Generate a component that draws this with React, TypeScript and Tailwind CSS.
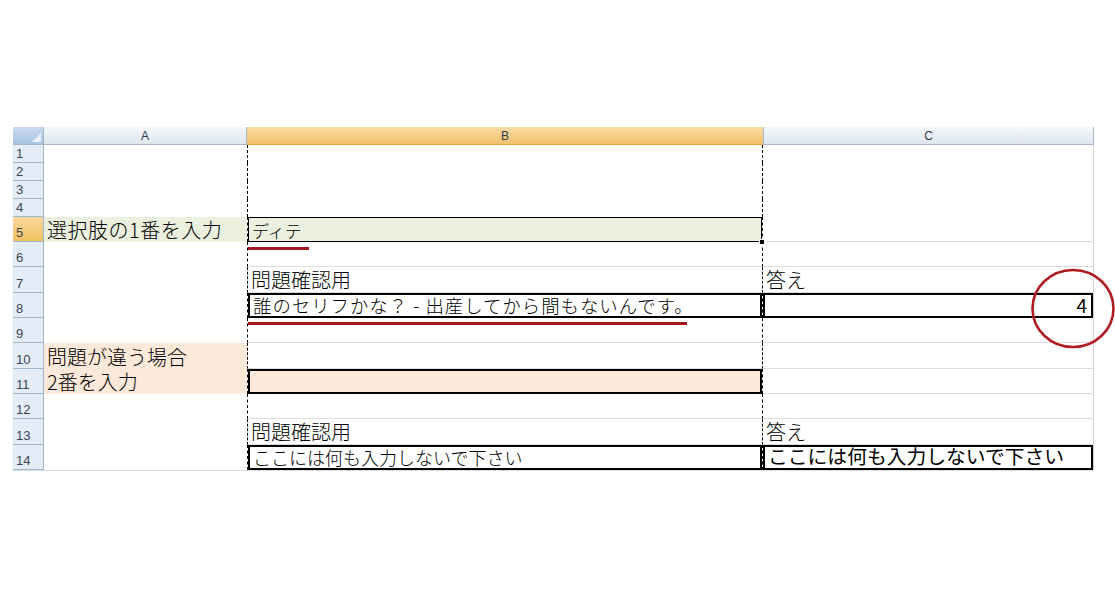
import React from 'react';

type CellSpec = {
  text?: string;
  bg?: string;
  box?: 'thin' | 'thick';
  size?: string;
  align?: 'left' | 'right';
  weight?: string;
  handle?: boolean;
};

type RowSpec = {
  n: number;
  h: string;
  grid: boolean;
  a?: CellSpec;
  b?: CellSpec;
  c?: CellSpec;
};

const rows: RowSpec[] = [
  { n: 1, h: 'h-[18px]', grid: false },
  { n: 2, h: 'h-[18px]', grid: false },
  { n: 3, h: 'h-[18px]', grid: false },
  { n: 4, h: 'h-[18px]', grid: false },
  {
    n: 5,
    h: 'h-[25px]',
    grid: true,
    a: { text: '選択肢の1番を入力', bg: 'bg-[#ebf1de]', size: 'text-[20px] tracking-[0.5px]' },
    b: { text: 'ディテ', bg: 'bg-[#ebf1de]', box: 'thin', size: 'text-[17px]', handle: true },
  },
  { n: 6, h: 'h-[25px]', grid: true },
  { n: 7, h: 'h-[26px]', grid: true, b: { text: '問題確認用' }, c: { text: '答え' } },
  {
    n: 8,
    h: 'h-[25px]',
    grid: true,
    b: { text: '誰のセリフかな？ - 出産してから間もないんです。', box: 'thick', size: 'text-[18.4px] tracking-[1px]' },
    c: { text: '4', box: 'thick', align: 'right', size: 'text-[19px]', weight: 'font-normal' },
  },
  { n: 9, h: 'h-[25px]', grid: true },
  { n: 10, h: 'h-[26px]', grid: true, a: { text: '問題が違う場合', bg: 'bg-[#fde9d9]' } },
  { n: 11, h: 'h-[25px]', grid: true, a: { text: '2番を入力', bg: 'bg-[#fde9d9]' }, b: { bg: 'bg-[#fde9d9]', box: 'thick' } },
  { n: 12, h: 'h-[25px]', grid: true },
  { n: 13, h: 'h-[26px]', grid: true, b: { text: '問題確認用' }, c: { text: '答え' } },
  {
    n: 14,
    h: 'h-[25px]',
    grid: true,
    b: { text: 'ここには何も入力しないで下さい', box: 'thick', size: 'text-[18px]' },
    c: { text: 'ここには何も入力しないで下さい', box: 'thick', size: 'text-[19.8px]', weight: 'font-normal' },
  },
];

const jp = "font-['MS_PGothic','Noto_Sans_CJK_JP',sans-serif]";

const CellText: React.FC<{ spec?: CellSpec }> = ({ spec }) => {
  if (!spec) return null;
  const boxCls =
    spec.box === 'thick'
      ? 'border-2 border-black'
      : spec.box === 'thin'
      ? 'border border-black'
      : '';
  return (
    <div
      className={`relative h-full w-full flex items-end ${spec.bg ?? ''} ${boxCls} ${
        spec.align === 'right' ? 'justify-end pr-[4px]' : 'pl-[3px]'
      }`}
    >
      {spec.text && (
        <span
          className={`block ${jp} ${spec.size ?? 'text-[20px]'} ${spec.weight ?? 'font-light'} leading-none whitespace-nowrap text-black pb-[2px]`}
        >
          {spec.text}
        </span>
      )}
      {spec.handle && (
        <span className="absolute -right-[4px] -bottom-[4px] w-[6px] h-[6px] bg-black border border-white" />
      )}
    </div>
  );
};

const App: React.FC = () => {
  return (
    <div className="w-[1115px] h-[601px] bg-white pt-[127px] pl-[13px] overflow-hidden">
      <div className="relative w-[1081px]">
        {/* column header */}
        <div className="flex h-[18px] font-['Liberation_Sans',sans-serif] text-[12px] text-[#2b3a4e]">
          <div className="w-[31px] bg-gradient-to-b from-[#c9d9ee] to-[#a9c4e6] border-r border-b border-[#9eb6ce] flex items-end justify-end p-[2px]">
            <span className="w-0 h-0 border-l-[9px] border-l-transparent border-b-[9px] border-b-[#eaf1fa]" />
          </div>
          <div className="w-[203px] bg-gradient-to-b from-[#f6f8fb] to-[#dde5ee] border-r border-b border-[#a9b9cb] flex items-center justify-center">
            A
          </div>
          <div className="w-[516px] bg-gradient-to-b from-[#f9dca3] to-[#f1c16a] border-b border-[#f0a43a] flex items-center justify-center">
            B
          </div>
          <div className="w-[331px] bg-gradient-to-b from-[#f6f8fb] to-[#dde5ee] border-l border-r border-b border-[#a9b9cb] flex items-center justify-center">
            C
          </div>
        </div>

        {rows.map((r) => (
          <div key={r.n} className={`flex ${r.h}`}>
            <div
              className={`w-[31px] shrink-0 border-r border-b border-[#9eb6ce] flex items-end pl-[3px] font-['Liberation_Sans',sans-serif] text-[13px] leading-none pb-[2px] text-[#3a4658] ${
                r.n === 5 ? 'bg-gradient-to-b from-[#f9d99f] to-[#f1c15f]' : 'bg-[#e4ecf7]'
              }`}
            >
              {r.n}
            </div>
            <div className="w-[203px] shrink-0">
              <CellText spec={r.a} />
            </div>
            <div
              className={`w-[516px] shrink-0 border-x border-x-black [border-left-style:dashed] [border-right-style:dashed] ${
                r.grid && !r.b?.box ? 'border-b border-b-[#dadcdd]' : ''
              }`}
            >
              <CellText spec={r.b} />
            </div>
            <div
              className={`w-[331px] shrink-0 border-r border-r-[#d4d4d4] ${
                r.grid && !r.c?.box ? 'border-b border-b-[#dadcdd]' : ''
              }`}
            >
              <CellText spec={r.c} />
            </div>
          </div>
        ))}
        <div className="h-px w-[1081px] bg-[#dadcdd]" />

        {/* red annotations */}
        <div className="absolute left-[235px] top-[120px] w-[61px] h-[3px] bg-[#a3181c]" />
        <div className="absolute left-[235px] top-[195px] w-[439px] h-[3px] bg-[#a3181c]" />
        <svg
          className="absolute left-[1018px] top-[140px]"
          width="86"
          height="84"
          viewBox="0 0 86 84"
        >
          <ellipse cx="42" cy="41.5" rx="40.5" ry="38.5" fill="none" stroke="#b01c22" strokeWidth="2.6" />
        </svg>
      </div>
    </div>
  );
};

export default App;
